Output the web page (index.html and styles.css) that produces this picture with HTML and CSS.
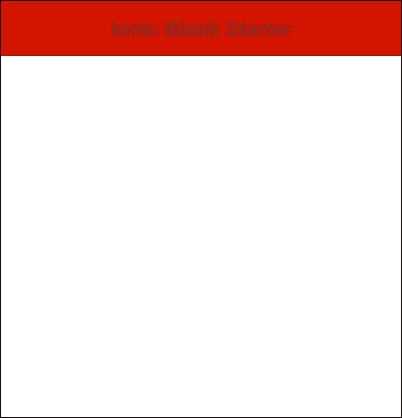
FILE: index.html
```html
<!DOCTYPE html>
<html>
<head>
<meta charset="utf-8">
<link rel="stylesheet" href="styles.css">
</head>
<body>
<div class="app">
  <header class="toolbar">
    <h1 class="title">Ionic Blank Starter</h1>
  </header>
  <main class="content"></main>
</div>
</body>
</html>
```

FILE: styles.css
```css
html, body {
  margin: 0;
  padding: 0;
  height: 100%;
  background: #ffffff;
}
.app {
  box-sizing: border-box;
  height: 418px;
  border: 1px solid #1a0a08;
  display: flex;
  flex-direction: column;
  font-family: "Liberation Sans", Arial, sans-serif;
}
.toolbar {
  height: 54px;
  background: #d31500;
  border-bottom: 1px solid #8e1a10;
  box-shadow: 0 1px 0 #f3b5ae;
  display: flex;
  align-items: center;
  justify-content: center;
  padding-top: 2px;
  box-sizing: border-box;
  flex: none;
  height: 55px;
}
.title {
  margin: 0;
  font-size: 20px;
  font-weight: bold;
  color: #962820;
  letter-spacing: 0.2px;
  padding-left: 1px;
  text-shadow: 0 0 1px #7a1e18;
}
.content {
  flex: 1;
  background: #ffffff;
}
```
